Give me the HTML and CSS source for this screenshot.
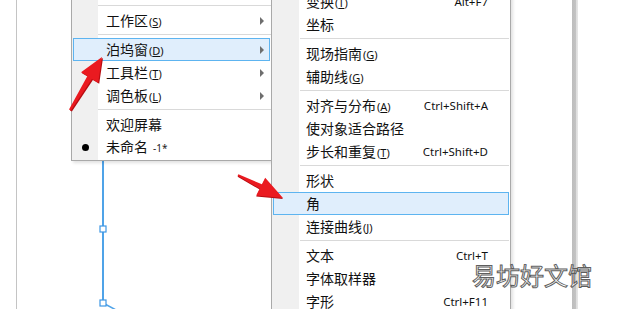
FILE: index.html
```html
<!DOCTYPE html>
<html lang="zh-CN">
<head>
    <meta charset="UTF-8">
    <meta name="viewport" content="width=device-width, initial-scale=1.0">
    <title>窗口菜单</title>
    <link rel="stylesheet" href="styles.css">
</head>
<body>
    <div class="desk">
        <div class="gap"></div>
        <div class="sheet"></div>
        <div class="scroll"></div>
        <div class="rest"></div>

        <!-- curve on the page, partly under the menus -->
        <svg class="drawing" width="620" height="309" viewBox="0 0 620 309">
            <line x1="103" y1="158" x2="103" y2="303" stroke="#4fa3e8" stroke-width="2"/>
            <line x1="103" y1="303" x2="118" y2="311" stroke="#4fa3e8" stroke-width="1.5"/>
            <rect x="100" y="226" width="6" height="6" fill="#fff" stroke="#3d97e4" stroke-width="1.2"/>
            <rect x="100" y="300" width="6" height="6" fill="#fff" stroke="#3d97e4" stroke-width="1.2"/>
        </svg>

        <div class="menu menu-main">
            <div class="sep"></div>
            <div class="item"><span class="label">工作区<span class="key">(<u>S</u>)</span></span><span class="sub"></span></div>
            <div class="sep"></div>
            <div class="item active"><span class="label">泊坞窗<span class="key">(<u>D</u>)</span></span><span class="sub"></span></div>
            <div class="item"><span class="label">工具栏<span class="key">(<u>T</u>)</span></span><span class="sub"></span></div>
            <div class="item"><span class="label">调色板<span class="key">(<u>L</u>)</span></span><span class="sub"></span></div>
            <div class="sep"></div>
            <div class="item"><span class="label">欢迎屏幕</span></div>
            <div class="item"><span class="dot"></span><span class="label">未命名<span class="doc">-1*</span></span></div>
        </div>

        <div class="menu menu-dock">
            <div class="item"><span class="label">变换<span class="key">(<u>T</u>)</span></span><span class="short">Alt+F7</span></div>
            <div class="item"><span class="label">坐标</span></div>
            <div class="sep"></div>
            <div class="item"><span class="label">现场指南<span class="key">(<u>G</u>)</span></span></div>
            <div class="item"><span class="label">辅助线<span class="key">(<u>G</u>)</span></span></div>
            <div class="sep"></div>
            <div class="item"><span class="label">对齐与分布<span class="key">(<u>A</u>)</span></span><span class="short">Ctrl+Shift+A</span></div>
            <div class="item"><span class="label">使对象适合路径</span></div>
            <div class="item"><span class="label">步长和重复<span class="key">(<u>T</u>)</span></span><span class="short">Ctrl+Shift+D</span></div>
            <div class="sep"></div>
            <div class="item"><span class="label">形状</span></div>
            <div class="item active"><span class="label">角</span></div>
            <div class="item"><span class="label">连接曲线<span class="key">(<u>J</u>)</span></span></div>
            <div class="sep"></div>
            <div class="item"><span class="label">文本</span><span class="short">Ctrl+T</span></div>
            <div class="item"><span class="label">字体取样器</span></div>
            <div class="item"><span class="label">字形</span><span class="short">Ctrl+F11</span></div>
        </div>

        <!-- red pointers drawn over the screenshot -->
        <svg class="pointers" width="620" height="309" viewBox="0 0 620 309">
            <polygon points="69,109.6 70.9,110.4 91.9,78.9 98.2,82.7 102,57 81,72.3 87.4,76.1" fill="#b80d12" transform="translate(1,1)"/>
            <polygon points="69,109.6 70.9,110.4 91.9,78.9 98.2,82.7 102,57 81,72.3 87.4,76.1" fill="#ea1a20"/>
            <polygon points="237.6,175.8 238.4,174.2 261.9,184.3 265.2,177.7 283,198 256.2,195.5 259.7,188.6" fill="#b80d12" transform="translate(0,1)"/>
            <polygon points="237.6,175.8 238.4,174.2 261.9,184.3 265.2,177.7 283,198 256.2,195.5 259.7,188.6" fill="#ea1a20"/>
        </svg>

        <div class="mark">易坊好文馆</div>
    </div>
</body>
</html>
```

FILE: styles.css
```css
body {
    margin: 0;
    font-family: "Noto Sans CJK SC", "Noto Sans", sans-serif;
    color: #000;
    background: #fff;
}

.desk {
    position: relative;
    display: flex;
    width: 620px;
    height: 309px;
    overflow: hidden;
    background: #fff;
}

.gap {
    width: 16px;
}

.sheet {
    width: 555px;
    border-left: 1px solid #c4c4c4;
}

.scroll {
    width: 6px;
    background: linear-gradient(to right, #bdbdbd 0, #c3c3c3 4px, #dcdcdc 4px, #e6e6e6 6px);
}

.rest {
    flex: 1;
}

.drawing,
.pointers {
    position: absolute;
    left: 0;
    top: 0;
}

.pointers {
    z-index: 5;
}

/* popup menus */
.menu {
    position: absolute;
    z-index: 2;
    box-sizing: border-box;
    border: 1px solid #a9a9a9;
    background: linear-gradient(to right, #f0f0f0 0, #f0f0f0 27px, #fff 27px);
    box-shadow: 2px 2px 3px rgba(0, 0, 0, 0.12);
}

.menu-main {
    left: 71px;
    top: -1px;
    width: 201px;
    padding: 3px 0 1px;
    background: linear-gradient(to right, #f0f0f0 0, #f0f0f0 26px, #fff 26px);
}

.menu-dock {
    left: 271px;
    top: -12px;
    width: 240px;
    padding: 1px 0 4px;
    z-index: 3;
}

.item {
    display: flex;
    align-items: center;
    box-sizing: border-box;
    height: 23px;
    margin: 0 1px;
    padding: 0 6px 0 33px;
    font-size: 14px;
    line-height: 23px;
    position: relative;
    color: #111;
}

.menu-dock .item {
    padding-right: 21px;
}

.item.active {
    background: #e0eefc;
    border: 1px solid #5db4f0;
    padding-left: 32px;
    padding-right: 5px;
}

.menu-dock .item.active {
    padding-right: 20px;
}

.label {
    flex: 1;
    white-space: nowrap;
}

.key {
    font-family: "Noto Sans", sans-serif;
    font-size: 11px;
    margin-left: 1px;
}

.key u {
    text-decoration-thickness: 1px;
    text-underline-offset: 1px;
}

.doc {
    font-family: "Noto Sans", sans-serif;
    font-size: 10px;
    margin-left: 5px;
    color: #222;
}

.short {
    font-family: "Noto Sans", sans-serif;
    font-size: 11.5px;
    white-space: nowrap;
}

.sub {
    width: 0;
    height: 0;
    border-left: 4px solid #6e6e6e;
    border-top: 4px solid transparent;
    border-bottom: 4px solid transparent;
}

.dot {
    position: absolute;
    left: 9px;
    top: 8px;
    width: 7px;
    height: 7px;
    border-radius: 50%;
    background: #000;
}

.sep {
    height: 1px;
    margin: 2px 0 3px 26px;
    background: #d9d9d9;
}

.menu-dock .sep {
    margin-left: 28px;
    margin-right: 1px;
}

/* watermark */
.mark {
    position: absolute;
    z-index: 6;
    left: 472px;
    top: 265px;
    font-size: 24px;
    line-height: 20px;
    color: #fff;
    -webkit-text-stroke: 1px #5e5e5e;
}
```
